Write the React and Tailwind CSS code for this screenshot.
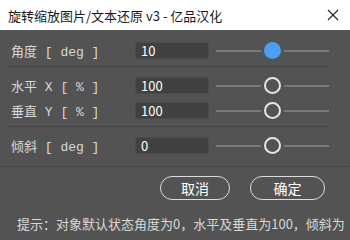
import React from "react";

const mono = { fontFamily: '"Liberation Mono", "Noto Sans CJK SC", monospace' };
const cjk = { fontFamily: '"Noto Sans CJK SC", "Liberation Sans", sans-serif' };

function Slider({ pos, active }) {
  return (
    <div className="relative ml-[7px] h-[17px] w-[113px]">
      <div className="absolute left-0 right-0 top-[8px] h-[2px] bg-[#7a7a7a]" />
      <div
        className={
          active
            ? "absolute top-[0px] h-[17px] w-[17px] rounded-full bg-[#4a9ff5] ring-[3px] ring-[#535353]"
            : "absolute top-[0px] h-[17px] w-[17px] rounded-full border-[2px] border-[#e6e6e6] bg-[#535353] ring-[3px] ring-[#535353]"
        }
        style={{ left: pos - 8 }}
      />
    </div>
  );
}

function Row({ label, value, active, className = "" }) {
  return (
    <div className={"flex h-[17px] items-center " + className}>
      <div
        className="w-[127px] pl-[3px] pt-[3px] text-[13px] leading-none text-[#d8d8d8] whitespace-pre"
        style={mono}
      >
        {label}
      </div>
      <div className="flex h-[17px] w-[74px] items-center rounded-[2px] border border-[#4b4b4b] bg-[#414141] pl-[5px] text-[13px] text-white" style={cjk}>
        {value}
      </div>
      <Slider pos={56} active={active} />
    </div>
  );
}

export default function App() {
  return (
    <div className="flex h-[240px] w-[350px] flex-col overflow-hidden bg-[#535353]" style={cjk}>
      <div className="flex h-[30px] shrink-0 items-center justify-between bg-white pl-[8px] pr-[10px]">
        <span className="text-[13px] leading-none text-[#1a1a1a]" style={cjk}>
          旋转缩放图片/文本还原 v3 - 亿品汉化
        </span>
        <svg width="12" height="12" viewBox="0 0 12 12" className="mr-[1px]">
          <path d="M1 1 L11 11 M11 1 L1 11" stroke="#222" strokeWidth="1.1" />
        </svg>
      </div>
      <div className="flex flex-col px-[8px] pr-[21px]">
        <Row label="角度 [ deg ]" value="10" active className="mt-[12px]" />
        <div className="mt-[7px] h-px bg-[#444444]" />
        <Row label="水平 X [ % ]" value="100" className="mt-[10px]" />
        <Row label="垂直 Y [ % ]" value="100" className="mt-[8px]" />
        <div className="mt-[7px] h-px bg-[#444444]" />
        <Row label="倾斜 [ deg ]" value="0" className="mt-[10px]" />
      </div>
      <div className="mt-[12px] h-px bg-[#464646]" />
      <div className="mt-[9px] flex gap-[20px] pl-[160px]">
        <button className="flex h-[24px] w-[70px] items-center justify-center rounded-full border-[1.5px] border-[#dcdcdc] text-[14px] text-white" style={cjk}>
          取消
        </button>
        <button className="flex h-[24px] w-[75px] items-center justify-center rounded-full border-[1.5px] border-[#dcdcdc] text-[14px] text-white" style={cjk}>
          确定
        </button>
      </div>
      <div className="mt-[17px] whitespace-nowrap pl-[17px] text-[13px] leading-none text-[#d8d8d8]" style={cjk}>
        提示：对象默认状态角度为0，水平及垂直为100，倾斜为
      </div>
    </div>
  );
}
